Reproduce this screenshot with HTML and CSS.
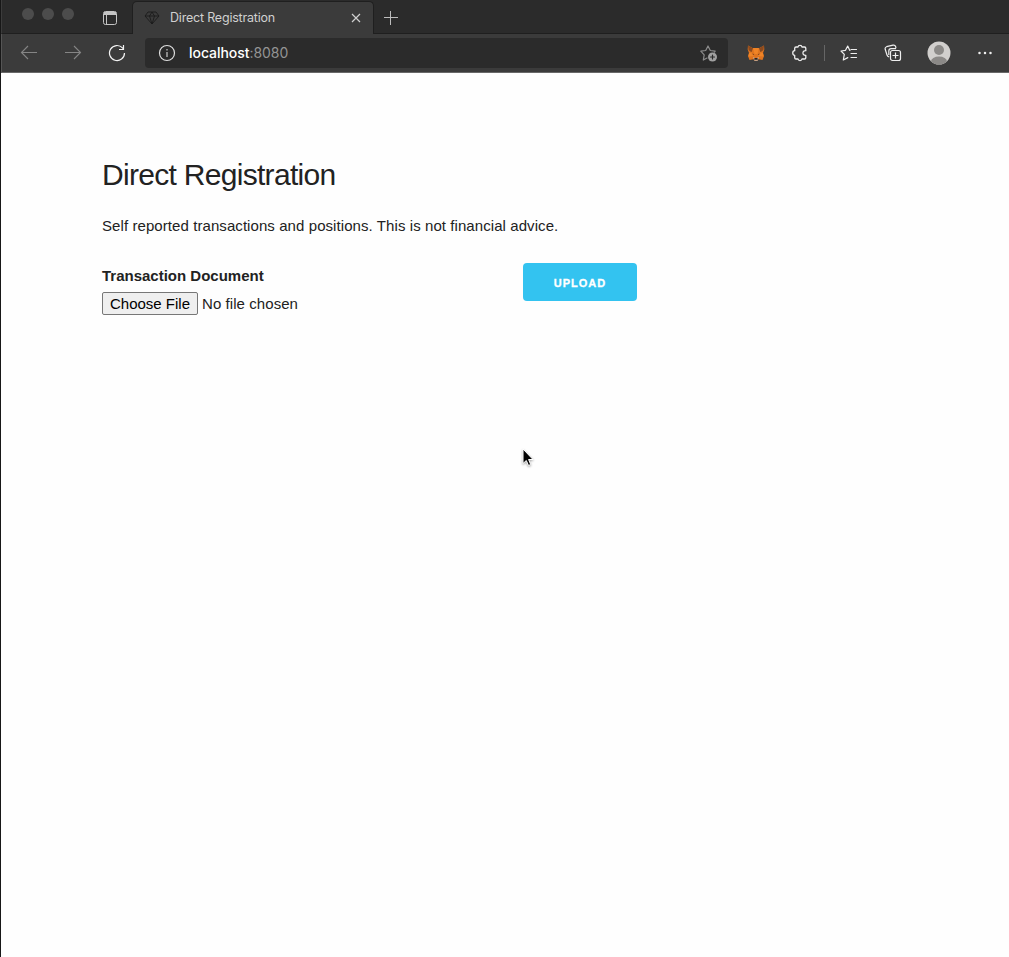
FILE: index.html
```html
<!DOCTYPE html>
<html lang="en">
<head>
<meta charset="utf-8">
<title>Direct Registration</title>
<link rel="stylesheet" href="styles.css">
</head>
<body>
<div class="window">
  <header class="tabs">
    <div class="lights"><i></i><i></i><i></i></div>
    <svg class="tab-menu" width="16" height="16" viewBox="0 0 16 16" fill="none" stroke="#c4c4c4"><rect x="1.5" y="1.5" width="13" height="13" rx="2"/><path d="M2 2.500h12M2 3.500h12M2 4.500h12M4.500 5v9"/></svg>
    <div class="tab">
      <svg class="gem" width="16" height="16" viewBox="0 0 16 16" fill="none" stroke="#1b1b1b" stroke-width=".9"><path d="M4 2h8l3 4-7 8-7-8zM1 6h14M5.500 6L8 14l2.500-8M5.500 6L8 2l2.500 4"/></svg>
      <span class="tab-title">Direct Registration</span>
      <svg class="close" width="10" height="10" viewBox="0 0 10 10" stroke="#d0d0d0" stroke-width="1.2"><path d="M1 1l8 8M9 1L1 9"/></svg>
    </div>
    <svg class="plus" width="16" height="16" viewBox="0 0 16 16" stroke="#bdbdbd"><path d="M1 7.500h14M7.500 1v14"/></svg>
  </header>
  <nav class="toolbar">
    <svg class="back" width="18" height="16" viewBox="0 0 18 16" fill="none" stroke="#858585" stroke-width="1.1"><path d="M17 7.500H1.500M8 1L1.500 7.500 8 14"/></svg>
    <svg class="forward" width="18" height="16" viewBox="0 0 18 16" fill="none" stroke="#858585" stroke-width="1.1"><path d="M1 7.500h15.500M10 1l6.500 6.500L10 14"/></svg>
    <svg class="reload" width="18" height="18" viewBox="0 0 18 18" fill="none" stroke="#f2f2f2" stroke-width="1.2"><path d="M16.500 9A7.500 7.500 0 1 1 14.500 3.900L15.500 5M15.500 1v4.500H11"/></svg>
    <div class="address">
      <svg width="18" height="18" viewBox="0 0 18 18" fill="none" stroke="#dedede" stroke-width="1.2"><circle cx="9" cy="9" r="7.500"/><path d="M9 8v5M9 5v1.500" stroke-width="1.400" stroke="#b5b5b5"/></svg>
      <span class="url"><b>localhost</b><span>:8080</span></span>
      <svg class="star-add" width="18" height="18" viewBox="0 0 18 18" fill="none" stroke="#8c8c8c" stroke-width="1.200" stroke-linejoin="round" stroke-linecap="round"><path d="M7 14l-3.700 2 .9-5.200L.8 7.200l4.900-.7L8 2l2.300 4.500 4.900.7-.8.800"/><circle cx="12.500" cy="13" r="4.500" fill="#a0a0a0" stroke="none"/><path d="M10.500 13h4M12.500 11v4" stroke="#2b2b2b"/></svg>
    </div>
    <svg class="fox" width="18" height="18" viewBox="0 0 18 18"><path fill="#df741f" d="M1 1.500l5 2.700h6l5-2.700.3 4L16 9l1 3-1.500 4-4-.7-1 1.500h-3l-1-1.500-4 .7L1 12l1-3L.7 5.500z"/><path fill="#8b4a1f" d="M1 1.500l5 2.700-1.500 4L1.500 6zM17 1.500l-5 2.700 1.500 4L16.500 6z"/><path fill="#f08426" d="M6 4h6l-1.500 6h-3zM2 9l3-.5L7 12l-5.500.5zM16 9l-3-.5-2 3.500 5.500.5z"/><path fill="#81451f" d="M4.500 9.500L7 10v1.200zM13.500 9.500L11 10v1.200z"/><path fill="#c6b5a8" d="M6 13l2 1h2l2-1-1.500 3.800h-3z"/><path fill="#30231b" d="M7.500 14h3l.3 1.700H7.200z"/></svg>
    <svg class="puzzle" width="17" height="18" viewBox="0 0 17 18" fill="none" stroke="#eee" stroke-width="1.300" stroke-linejoin="round"><path d="M5 3h2C7.300.9 10.700.9 11 3h2.500q1.300 0 1.300 1.300v2.400c-3.800-.5-3.800 5 0 4.600v2.400q0 1.300-1.300 1.300H11c-.3 2.100-3.700 2.100-4 0H5q-1.300 0-1.300-1.300v-2.400c-2.600-.2-2.600-4.400 0-4.600V4.300Q3.700 3 5 3z"/></svg>
    <i class="divider"></i>
    <svg class="favorites" width="18" height="18" viewBox="0 0 18 18" fill="none" stroke="#eee" stroke-width="1.200" stroke-linejoin="round" stroke-linecap="round"><path d="M10 6.300H9.700L7.700 2 5.500 6.300 1 7l3.300 3.400-1 5.600 4.500-2.400M11 5.500h5.500M11 9.500h5.500M11 13.500h5.500"/></svg>
    <svg class="collections" width="18" height="18" viewBox="0 0 18 18" fill="none" stroke="#eee" stroke-width="1.200"><path d="M5.200 13Q3.500 12.500 3 11L1.200 5.300Q.7 3.300 2.600 2.700L9 1.100Q11 .7 11.600 2.500L12 4"/><rect x="6.500" y="6.500" width="10" height="10" rx="2"/><path d="M4.800 11V7q0-2.300 2.300-2.300h5M11.500 8.500v6M8.500 11.500h6"/></svg>
    <svg class="profile" width="24" height="24" viewBox="0 0 24 24"><defs><clipPath id="face"><circle cx="12" cy="12" r="11.500"/></clipPath></defs><circle cx="12" cy="12" r="11.500" fill="#d1cfcd"/><g fill="#8b8987" clip-path="url(#face)"><circle cx="12" cy="9" r="5"/><ellipse cx="12" cy="20.500" rx="8" ry="5"/></g></svg>
    <svg class="more" width="16" height="4" viewBox="0 0 16 4" fill="#eee"><circle cx="2.500" cy="2" r="1.250"/><circle cx="8" cy="2" r="1.250"/><circle cx="13.500" cy="2" r="1.250"/></svg>
  </nav>
  <main class="page">
    <h1>Direct Registration</h1>
    <p>Self reported transactions and positions. This is not financial advice.</p>
    <form class="upload-form">
      <div class="field">
        <label>Transaction Document</label>
        <div class="file"><button type="button">Choose File</button><span>No file chosen</span></div>
      </div>
      <button class="upload" type="button">UPLOAD</button>
    </form>
  </main>
  <svg class="cursor" width="14" height="20" viewBox="0 0 14 20"><path d="M2 1v14.500l3.300-3 2.200 5 2.200-1-2.100-5H12z" stroke="#fff" stroke-width="1"/></svg>
</div>
</body>
</html>
```
FILE: styles.css
```css
* { box-sizing: border-box; }
body { margin: 0; background: #fefefe; color: #222; font-family: "Liberation Sans", Arial, sans-serif; }
svg { display: block; flex: none; }
button { font-family: inherit; }
.window { position: relative; height: 957px; border-left: 1px solid #171717; overflow: hidden; }
.tabs { height: 34px; display: flex; background: #2b2b2b; border-bottom: 1px solid #1f1f1f; border-left: 1px solid #3c3c3c; }
.lights { display: flex; gap: 8px; margin: 8px 0 0 20px; }
.lights i { width: 12px; height: 12px; border-radius: 50%; background: #4c4c4c; }
.tab-menu { margin: 10px 0 0 28px; }
.tab { display: flex; align-items: center; width: 242px; height: 33px; margin: 1px 0 -1px 14px; padding: 0 13px 0 11px; border: 1px solid #1f1f1f; border-bottom: 0; border-radius: 5px 5px 0 0; background: #3b3b3b; }
.tab-title { flex: 1; margin-left: 10px; font: 12.5px/16px Inter, sans-serif; letter-spacing: -.2px; color: #d0d0d0; white-space: nowrap; }
.close { margin-right: -1px; }
.plus { margin: 10px 0 0 9px; }
.toolbar { height: 39px; display: flex; align-items: center; background: #3b3b3b; border-bottom: 1px solid #696969; border-left: 1px solid #555; padding-left: 18px; }
.forward { margin-left: 26px; }
.reload { margin-left: 26px; }
.address { display: flex; align-items: center; width: 583px; height: 30px; margin-left: 19px; padding: 0 10px 0 13px; border-radius: 4px; background: #2b2b2b; }
.url { flex: 1; margin-left: 13px; font: 14px/18px Inter, sans-serif; letter-spacing: -.05px; color: #949494; }
.url b { color: #fff; font-weight: 500; }
.fox { margin-left: 19px; }
.puzzle { margin-left: 26px; }
.divider { width: 1px; height: 16px; margin-left: 16px; background: #666; }
.favorites { margin-left: 15px; }
.collections { margin-left: 26px; }
.profile { margin-left: 25px; }
.more { margin-left: 26px; }
.page { padding: 84px 0 0 101px; font-size: 15px; }
h1 { margin: 0; font-size: 30px; line-height: 36px; font-weight: 400; letter-spacing: -.7px; }
p { margin: 21px 0 0; line-height: 24px; letter-spacing: .078px; }
.upload-form { display: flex; align-items: flex-start; margin-top: 25px; }
.field { width: 421px; }
label { display: block; padding-top: 1px; line-height: 24px; font-weight: 600; }
.file { display: flex; align-items: center; gap: 4px; margin-top: 4px; }
.file button { width: 96px; height: 23px; padding: 0; border: 1px solid #777; border-radius: 2px; background: #efefef; color: #000; font-size: 15px; line-height: 21px; }
.file span { letter-spacing: .07px; }
.upload { width: 114px; height: 38px; border: 0; border-radius: 4px; background: #33c3f0; color: #fff; font-size: 11px; line-height: 38px; font-weight: 600; letter-spacing: 1px; -webkit-text-stroke: .3px #fff; }
.cursor { position: absolute; left: 520px; top: 448px; filter: drop-shadow(0 1px 1px rgba(0, 0, 0, .35)); }
```
